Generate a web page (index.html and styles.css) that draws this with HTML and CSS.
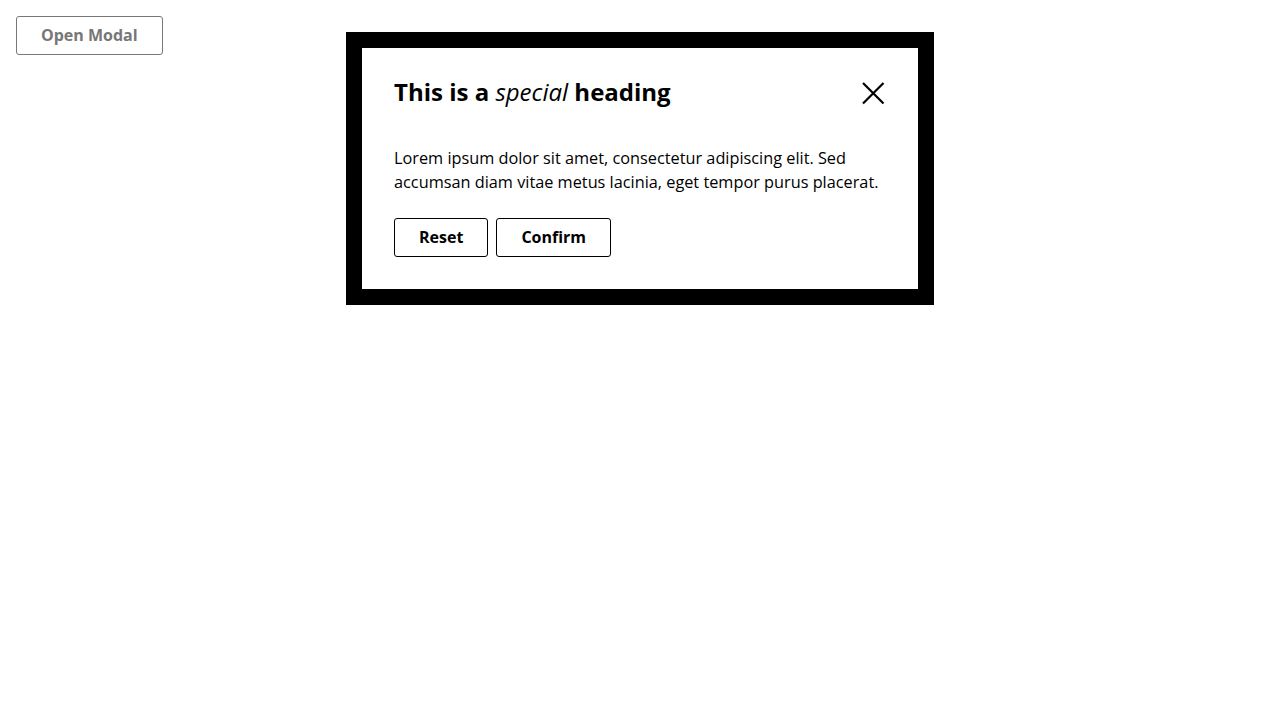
FILE: index.html
```html
<!DOCTYPE html>
<html>
<head>
<meta charset="utf-8">
<link rel="stylesheet" href="styles.css">
</head>
<body>
<div class="page">
  <button class="btn btn-open" type="button">Open Modal</button>
  <div class="modal" role="dialog" aria-labelledby="modal-title">
    <div class="modal-inner">
      <div class="modal-header">
        <h2 id="modal-title" class="modal-title">This is a <em>special</em> heading</h2>
        <button class="close" type="button" aria-label="Close">
          <svg width="24" height="24" viewBox="0 0 24 24" aria-hidden="true">
            <path d="M2 2 L22.5 22.5 M22.5 2 L2 22.5" stroke="#000" stroke-width="2.2" fill="none"/>
          </svg>
        </button>
      </div>
      <p class="modal-text">Lorem ipsum dolor sit amet, consectetur adipiscing elit. Sed accumsan diam vitae metus lacinia, eget tempor purus placerat.</p>
      <div class="modal-actions">
        <button class="btn" type="button">Reset</button>
        <button class="btn" type="button">Confirm</button>
      </div>
    </div>
  </div>
</div>
</body>
</html>
```

FILE: styles.css
```css
html, body {
  margin: 0;
  padding: 0;
  background: #fff;
}
body {
  font-family: "Open Sans", "Noto Sans", sans-serif;
  color: #000;
  font-size: 16px;
  line-height: 24px;
}
.page {
  position: relative;
  padding: 16px;
  height: 720px;
  box-sizing: border-box;
}
.btn {
  font-family: "Open Sans", "Noto Sans", sans-serif;
  font-weight: 700;
  font-size: 16px;
  line-height: 24px;
  padding: 6px 24px 7px;
  background: #fff;
  color: #000;
  border: 1px solid #000;
  border-radius: 3px;
  cursor: pointer;
}
.btn-open {
  color: #777;
  border-color: #777;
}
.modal {
  position: absolute;
  top: 32px;
  left: 346px;
  width: 588px;
  box-sizing: border-box;
  border: 16px solid #000;
  background: #fff;
}
.modal-inner {
  padding: 32px;
}
.modal-header {
  display: flex;
  justify-content: space-between;
  align-items: center;
  height: 24px;
  margin-top: 0;
  margin-bottom: 42px;
}
.modal-title {
  margin: 0;
  font-size: 24px;
  line-height: 24px;
  font-weight: 700;
}
.modal-title em {
  font-style: italic;
  font-weight: 500;
}
.close {
  display: flex;
  align-items: center;
  justify-content: center;
  width: 24px;
  height: 24px;
  padding: 0;
  margin-right: 1px;
  margin-top: 2px;
  border: 0;
  background: none;
  cursor: pointer;
}
.modal-text {
  margin: 0 0 24px;
  font-size: 16.3px;
}
.modal-actions {
  display: flex;
  gap: 8px;
}
```
